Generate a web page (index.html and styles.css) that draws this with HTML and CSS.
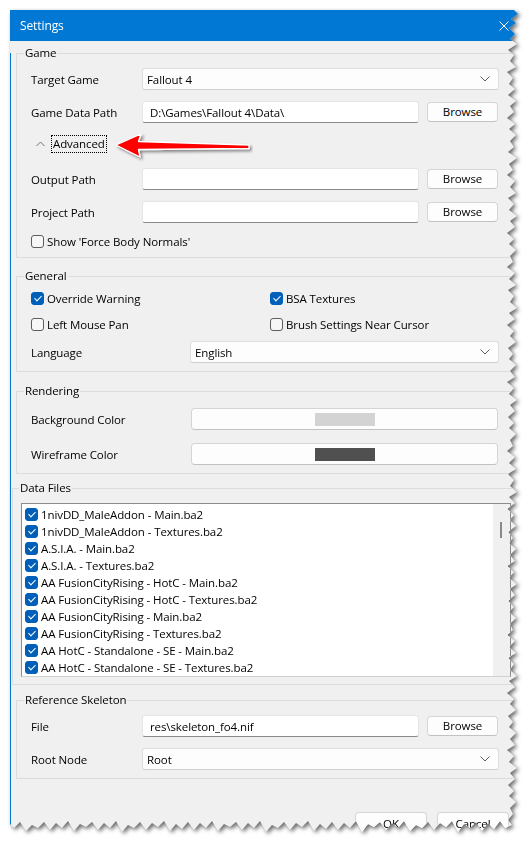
FILE: index.html
```html
<!DOCTYPE html>
<html lang="en">
<head>
  <meta charset="UTF-8">
  <title>Settings</title>
  <link rel="stylesheet" href="styles.css">
</head>
<body>
  <div class="shot">
    <div class="frame">
      <div class="window">
        <div class="titlebar">
          <span>Settings</span>
          <svg class="close" width="10" height="10" viewBox="0 0 10 10"><path d="M0.5 0.5L9.5 9.5M9.5 0.5L0.5 9.5" stroke="#fff" stroke-width="1"/></svg>
        </div>
        <div class="client">

          <div class="group game">
            <div class="group-title">Game</div>
            <div class="row first">
              <label class="lbl">Target Game</label>
              <div class="combo w-full">Fallout 4<svg class="chev" width="10" height="6" viewBox="0 0 10 6"><path d="M0.5 0.5L5 5L9.5 0.5" fill="none" stroke="#606060"/></svg></div>
            </div>
            <div class="row">
              <label class="lbl">Game Data Path</label>
              <div class="field">D:\Games\Fallout 4\Data\</div>
              <button class="btn browse">Browse</button>
            </div>
            <div class="row advanced">
              <svg class="up" width="9" height="6" viewBox="0 0 9 6"><path d="M0.5 5L4.5 1L8.5 5" fill="none" stroke="#707070"/></svg>
              <span class="focus">Advanced</span>
            </div>
            <div class="row output">
              <label class="lbl">Output Path</label>
              <div class="field"></div>
              <button class="btn browse">Browse</button>
            </div>
            <div class="row">
              <label class="lbl">Project Path</label>
              <div class="field"></div>
              <button class="btn browse">Browse</button>
            </div>
            <div class="check-row">
              <span class="cb"></span>Show 'Force Body Normals'
            </div>
          </div>

          <div class="group general">
            <div class="group-title">General</div>
            <div class="checks">
              <div class="check-row"><span class="cb on"></span>Override Warning</div>
              <div class="check-row"><span class="cb on"></span>BSA Textures</div>
              <div class="check-row"><span class="cb"></span>Left Mouse Pan</div>
              <div class="check-row"><span class="cb"></span>Brush Settings Near Cursor</div>
            </div>
            <div class="row lang">
              <label class="lbl long">Language</label>
              <div class="combo w-lang">English<svg class="chev" width="10" height="6" viewBox="0 0 10 6"><path d="M0.5 0.5L5 5L9.5 0.5" fill="none" stroke="#606060"/></svg></div>
            </div>
          </div>

          <div class="group rendering">
            <div class="group-title">Rendering</div>
            <div class="row first-r">
              <label class="lbl longer">Background Color</label>
              <button class="btn color"><span class="swatch light"></span></button>
            </div>
            <div class="row second-r">
              <label class="lbl longer">Wireframe Color</label>
              <button class="btn color"><span class="swatch dark"></span></button>
            </div>
          </div>

          <div class="group data">
            <div class="group-title">Data Files</div>
            <div class="list">
              <div class="items">
                <div class="item"><span class="cb on"></span>1nivDD_MaleAddon - Main.ba2</div>
                <div class="item"><span class="cb on"></span>1nivDD_MaleAddon - Textures.ba2</div>
                <div class="item"><span class="cb on"></span>A.S.I.A. - Main.ba2</div>
                <div class="item"><span class="cb on"></span>A.S.I.A. - Textures.ba2</div>
                <div class="item"><span class="cb on"></span>AA FusionCityRising - HotC - Main.ba2</div>
                <div class="item"><span class="cb on"></span>AA FusionCityRising - HotC - Textures.ba2</div>
                <div class="item"><span class="cb on"></span>AA FusionCityRising - Main.ba2</div>
                <div class="item"><span class="cb on"></span>AA FusionCityRising - Textures.ba2</div>
                <div class="item"><span class="cb on"></span>AA HotC - Standalone - SE - Main.ba2</div>
                <div class="item"><span class="cb on"></span>AA HotC - Standalone - SE - Textures.ba2</div>
              </div>
              <div class="scrollbar"><span class="thumb"></span></div>
            </div>
          </div>

          <div class="group skeleton">
            <div class="group-title">Reference Skeleton</div>
            <div class="row first">
              <label class="lbl">File</label>
              <div class="field">res\skeleton_fo4.nif</div>
              <button class="btn browse">Browse</button>
            </div>
            <div class="row">
              <label class="lbl">Root Node</label>
              <div class="combo w-full">Root<svg class="chev" width="10" height="6" viewBox="0 0 10 6"><path d="M0.5 0.5L5 5L9.5 0.5" fill="none" stroke="#606060"/></svg></div>
            </div>
          </div>

          <div class="dialog-buttons">
            <button class="btn action">OK</button>
            <button class="btn action">Cancel</button>
          </div>
        </div>
      </div>
    </div>

    <svg class="callout" width="140" height="34" viewBox="0 0 140 34">
      <defs>
        <filter id="sh" x="-10%" y="-30%" width="130%" height="180%">
          <feDropShadow dx="2" dy="2" stdDeviation="1.5" flood-color="#000" flood-opacity="0.45"/>
        </filter>
      </defs>
      <path d="M3 13 L28 2 L25.5 9.5 L136 13 L136 16.5 L25.5 17.5 L27 25 Z" fill="#f00" stroke="#fff" stroke-width="1.3" stroke-linejoin="round" filter="url(#sh)"/>
    </svg>
  </div>
</body>
</html>
```

FILE: styles.css
```css
body {
  margin: 0;
  background: #fff;
  font-family: "Open Sans", "Noto Sans", sans-serif;
  font-size: 11.5px;
  letter-spacing: -0.1px;
  color: #000;
}
.shot {
  position: relative;
  width: 532px;
  height: 850px;
  padding: 10px 0 0 10px;
  box-sizing: border-box;
}
.frame {
  filter: drop-shadow(2px 2px 2px rgba(0, 0, 0, 0.6));
}
.window {
  width: 512px;
  height: 822px;
  background: #f0f0f0;
  overflow: hidden;
  clip-path: polygon(0 0, 504px 0, 508px 4px, 501px 9px, 506px 13px, 499px 18px, 505px 24px, 500px 29px, 507px 34px, 498px 40px, 504px 45px, 500px 51px, 506px 57px, 497px 62px, 503px 68px, 499px 74px, 505px 79px, 498px 85px, 506px 91px, 500px 96px, 504px 102px, 497px 108px, 505px 114px, 499px 119px, 506px 125px, 500px 131px, 504px 137px, 498px 142px, 507px 148px, 499px 154px, 503px 160px, 497px 165px, 505px 171px, 500px 177px, 506px 183px, 498px 188px, 504px 194px, 499px 200px, 507px 206px, 500px 211px, 505px 217px, 497px 223px, 504px 229px, 499px 234px, 506px 240px, 500px 246px, 503px 252px, 497px 257px, 505px 263px, 499px 269px, 506px 275px, 498px 280px, 504px 286px, 500px 292px, 507px 298px, 499px 303px, 505px 309px, 497px 315px, 504px 321px, 500px 326px, 506px 332px, 498px 338px, 503px 344px, 499px 349px, 506px 355px, 500px 361px, 505px 367px, 497px 372px, 504px 378px, 499px 384px, 507px 390px, 500px 395px, 505px 401px, 498px 407px, 504px 413px, 499px 418px, 506px 424px, 500px 430px, 503px 436px, 497px 441px, 505px 447px, 499px 453px, 506px 459px, 498px 464px, 504px 470px, 500px 476px, 507px 482px, 499px 487px, 505px 493px, 497px 499px, 504px 505px, 500px 510px, 506px 516px, 498px 522px, 503px 528px, 499px 533px, 506px 539px, 500px 545px, 505px 551px, 497px 556px, 504px 562px, 499px 568px, 507px 574px, 500px 579px, 505px 585px, 498px 591px, 504px 597px, 499px 602px, 506px 608px, 500px 614px, 503px 620px, 497px 625px, 505px 631px, 499px 637px, 506px 643px, 498px 648px, 504px 654px, 500px 660px, 507px 666px, 499px 671px, 505px 677px, 497px 683px, 504px 689px, 500px 694px, 506px 700px, 498px 706px, 503px 712px, 499px 717px, 506px 723px, 500px 729px, 505px 735px, 497px 740px, 504px 746px, 499px 752px, 507px 758px, 500px 763px, 505px 769px, 498px 775px, 504px 781px, 499px 786px, 506px 792px, 500px 798px, 503px 804px, 498px 810px, 502px 815px, 495px 818px, 490px 811px, 484px 819px, 478px 813px, 472px 821px, 466px 812px, 460px 818px, 454px 814px, 448px 822px, 442px 811px, 436px 817px, 430px 813px, 424px 820px, 418px 812px, 412px 818px, 406px 815px, 400px 821px, 394px 811px, 388px 818px, 382px 813px, 376px 820px, 370px 812px, 364px 817px, 358px 814px, 352px 822px, 346px 811px, 340px 818px, 334px 813px, 328px 820px, 322px 812px, 316px 819px, 310px 814px, 304px 821px, 298px 811px, 292px 817px, 286px 813px, 280px 820px, 274px 812px, 268px 818px, 262px 815px, 256px 822px, 250px 811px, 244px 818px, 238px 813px, 232px 820px, 226px 812px, 220px 817px, 214px 814px, 208px 821px, 202px 811px, 196px 818px, 190px 813px, 184px 820px, 178px 812px, 172px 819px, 166px 814px, 160px 821px, 154px 811px, 148px 817px, 142px 813px, 136px 820px, 130px 812px, 124px 818px, 118px 815px, 112px 822px, 106px 811px, 100px 818px, 94px 813px, 88px 820px, 82px 812px, 76px 817px, 70px 814px, 64px 821px, 58px 811px, 52px 818px, 46px 813px, 40px 820px, 34px 812px, 28px 818px, 22px 815px, 16px 821px, 10px 812px, 4px 818px, 0 814px);
}
.titlebar {
  display: flex;
  align-items: center;
  height: 31px;
  padding: 0 13px 0 10px;
  background: #0078d4;
  color: #fff;
  font-size: 12px;
}
.titlebar .close {
  margin-left: auto;
}
.client {
  height: 791px;
  border-left: 1px solid #0078d4;
}

/* group boxes */
.group {
  width: 504px;
  box-sizing: border-box;
  margin-left: 5px;
  padding: 0 0 8px 14px;
  border: 1px solid #dcdcdc;
}
.group-title {
  width: fit-content;
  margin: -9px 0 0 -7px;
  padding: 0 1px;
  line-height: 16px;
  background: #f0f0f0;
}
.game { margin-top: 12px; }
.general { margin-top: 18px; }
.rendering { margin-top: 19px; }
.data {
  margin: 14px 0 0 1px;
  padding: 0 0 7px 8px;
}
.data .group-title { margin-left: -2px; }
.skeleton { margin-top: 15px; }

.row {
  display: flex;
  align-items: center;
  height: 22px;
  margin-top: 11px;
}
.row.first { margin-top: 7px; }
.row.advanced {
  height: 18px;
  margin-top: 12px;
  padding-left: 5px;
}
.row.output { margin-top: 15px; }
.row.lang { margin-top: 9px; }
.row.first-r { margin-top: 9px; }
.row.second-r { margin-top: 13px; }

.lbl {
  width: 111px;
  flex: none;
}
.lbl.long { width: 159px; }
.lbl.longer { width: 160px; }

/* controls */
.field {
  width: 277px;
  height: 22px;
  box-sizing: border-box;
  padding: 0 7px;
  line-height: 21px;
  background: #fff;
  border: 1px solid #e5e5e5;
  border-bottom-color: #8a8a8a;
  border-radius: 3px;
  white-space: nowrap;
  overflow: hidden;
}
.combo {
  display: flex;
  align-items: center;
  height: 22px;
  box-sizing: border-box;
  padding: 0 8px 0 4px;
  background: #fdfdfd;
  border: 1px solid #dedede;
  border-bottom-color: #cfcfcf;
  border-radius: 3px;
}
.combo .chev { margin-left: auto; }
.w-full { width: 357px; }
.w-lang { width: 309px; }

.btn {
  font: inherit;
  letter-spacing: inherit;
  color: #000;
  background: #fdfdfd;
  border: 1px solid #d5d5d5;
  border-bottom-color: #c2c2c2;
  border-radius: 4px;
  padding: 0;
}
.browse {
  width: 71px;
  height: 20px;
  margin-left: 8px;
  line-height: 18px;
}
.color {
  display: flex;
  align-items: center;
  justify-content: center;
  width: 307px;
  height: 22px;
}
.swatch {
  width: 60px;
  height: 13px;
}
.swatch.light { background: #d3d3d3; }
.swatch.dark { background: #505050; }

.up { margin-right: 6px; }
.focus {
  padding: 0 1px;
  line-height: 16px;
  border: 1px dotted #000;
}

/* checkboxes */
.check-row {
  display: flex;
  align-items: center;
  height: 16px;
  margin-top: 10px;
}
.cb {
  position: relative;
  flex: none;
  width: 13px;
  height: 13px;
  box-sizing: border-box;
  margin-right: 3px;
  background: #f7f7f7;
  border: 1px solid #5d5d5d;
  border-radius: 3px;
}
.cb.on {
  background: #005fb8;
  border-color: #005fb8;
}
.cb.on::after {
  content: "";
  position: absolute;
  left: 3.5px;
  top: 1px;
  width: 3px;
  height: 6px;
  border: solid #fff;
  border-width: 0 1px 1px 0;
  transform: rotate(45deg);
}
.checks {
  display: grid;
  grid-template-columns: 239px auto;
  row-gap: 10px;
  margin-top: 6px;
}
.checks .check-row { margin-top: 0; }

/* data files list */
.list {
  display: flex;
  width: 490px;
  height: 174px;
  box-sizing: border-box;
  margin-top: 7px;
  background: #fff;
  border: 1px solid #8c8c8c;
  border-bottom-color: #d0d0d0;
  overflow: hidden;
}
.items {
  flex: 1;
  padding: 2px 0 0 3px;
}
.item {
  display: flex;
  align-items: center;
  height: 17px;
  white-space: nowrap;
}
.scrollbar {
  width: 17px;
  background: #f0f0f0;
}
.thumb {
  display: block;
  width: 2px;
  height: 16px;
  margin: 18px 0 0 7px;
  background: #8a8a8a;
}

.dialog-buttons {
  display: flex;
  gap: 10px;
  margin-top: 33px;
  padding-left: 344px;
}
.action {
  width: 72px;
  height: 23px;
}

.callout {
  position: absolute;
  left: 113px;
  top: 132px;
}
```
